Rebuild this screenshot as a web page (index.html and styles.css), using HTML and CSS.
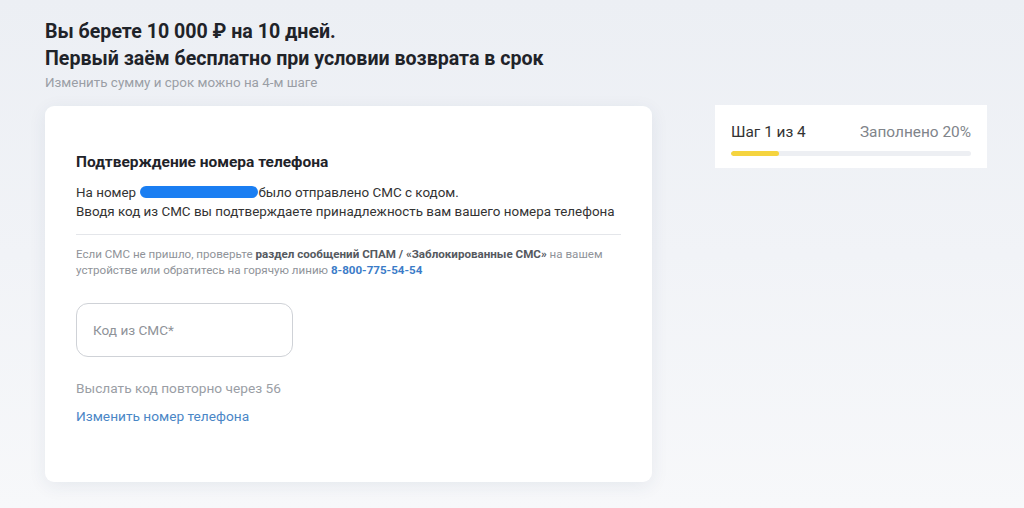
FILE: index.html
```html
<!DOCTYPE html>
<html lang="ru">
<head>
<meta charset="utf-8">
<link rel="stylesheet" href="styles.css">
</head>
<body>
<div class="page">
  <header class="intro">
    <h1 class="title">Вы берете 10 000 ₽ на 10 дней.<br>Первый заём бесплатно при условии возврата в срок</h1>
    <p class="subtitle">Изменить сумму и срок можно на 4-м шаге</p>
  </header>
  <div class="layout">
    <section class="card">
      <h2 class="card-title">Подтверждение номера телефона</h2>
      <p class="card-text">На номер <span class="masked">+7 (999) 999-99-99</span>было отправлено СМС с кодом.<br>Вводя код из СМС вы подтверждаете принадлежность вам вашего номера телефона</p>
      <hr class="divider">
      <p class="note">Если СМС не пришло, проверьте <b>раздел сообщений СПАМ / «Заблокированные СМС»</b> на вашем устройстве или обратитесь на горячую линию <a class="phone" href="#">8-800-775-54-54</a></p>
      <label class="field"><span class="placeholder">Код из СМС*</span></label>
      <p class="resend">Выслать код повторно через 56</p>
      <a class="change" href="#">Изменить номер телефона</a>
    </section>
    <aside class="progress">
      <div class="progress-head">
        <span class="step">Шаг 1 из 4</span>
        <span class="filled">Заполнено 20%</span>
      </div>
      <div class="bar"><div class="bar-fill" style="width:20%"></div></div>
    </aside>
  </div>
</div>
</body>
</html>
```
FILE: styles.css
```css
* { box-sizing: border-box; }
html, body { margin: 0; height: 100%; }
body {
  font-family: Roboto, "Noto Sans", Arial, sans-serif;
  background: linear-gradient(180deg, #eceff4 0%, #f1f3f7 50%, #f7f8fa 100%);
  color: #333;
  overflow: hidden;
}
.page { padding: 18px 0 0 45px; }
.title {
  margin: 0;
  font-size: 19.6px;
  line-height: 27px;
  font-weight: 700;
  color: #1f2329;
}
.subtitle {
  margin: 2px 0 0;
  font-size: 13.4px;
  line-height: 18px;
  color: #9a9ea5;
}
.layout {
  display: flex;
  align-items: flex-start;
  gap: 63px;
  margin-top: 14px;
}
.card {
  width: 607px;
  background: #fff;
  border-radius: 9px;
  box-shadow: 0 4px 18px rgba(40, 60, 100, 0.08);
  padding: 46px 31px 56px;
}
.card-title {
  margin: 0;
  font-size: 15.5px;
  line-height: 20px;
  font-weight: 700;
  color: #1f2329;
}
.card-text {
  margin: 11px 0 0;
  font-size: 13.4px;
  line-height: 19px;
  color: #333;
}
.masked {
  display: inline-block;
  background: #1a7ef2;
  color: transparent;
  border-radius: 7px;
  height: 12px;
  line-height: 12px;
  width: 118px;
  overflow: hidden;
  vertical-align: -1px;
  margin-left: 1px;
  font-size: 10px;
}
.divider {
  margin: 13px 0 0;
  border: 0;
  border-top: 1px solid #e4e6ea;
}
.note {
  margin: 11px 0 0;
  font-size: 11.6px;
  line-height: 16px;
  color: #8f9399;
}
.note b { color: #55595f; font-weight: 700; }
.phone { color: #3b7cc8; font-weight: 700; text-decoration: none; }
.field {
  display: flex;
  align-items: center;
  width: 217px;
  height: 54px;
  margin-top: 25px;
  border: 1px solid #cfd2d7;
  border-radius: 12px;
  padding: 0 16px;
}
.placeholder { font-size: 13.6px; color: #8f9399; }
.resend {
  margin: 22px 0 0;
  font-size: 13.7px;
  line-height: 19px;
  color: #9a9ea5;
}
.change {
  display: block;
  margin-top: 9px;
  font-size: 13.7px;
  line-height: 19px;
  color: #4a86c6;
  text-decoration: none;
}
.progress {
  width: 272px;
  background: #fff;
  padding: 17px 16px 12px;
  margin-top: -1px;
}
.progress-head {
  display: flex;
  justify-content: space-between;
  font-size: 15.4px;
  line-height: 20px;
}
.step { color: #333; }
.filled { color: #80848a; }
.bar {
  margin-top: 9px;
  height: 5px;
  background: #edeff3;
  border-radius: 3px;
  overflow: hidden;
}
.bar-fill {
  height: 100%;
  background: #f5d43f;
  border-radius: 3px;
}
```
